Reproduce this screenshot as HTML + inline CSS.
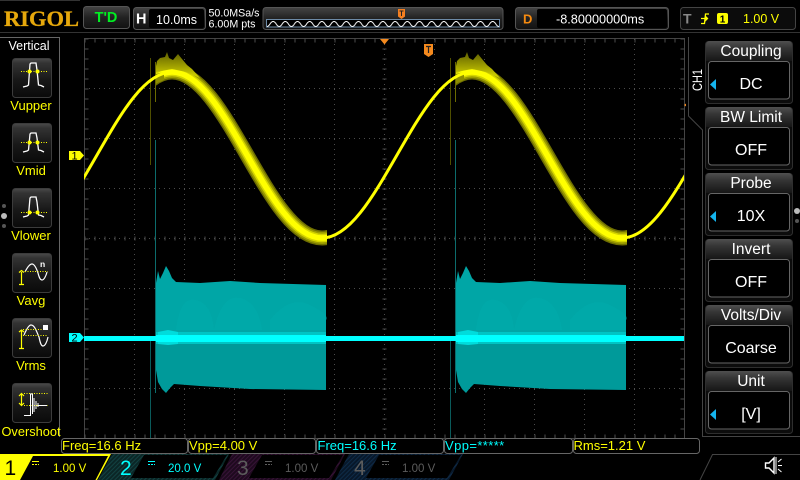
<!DOCTYPE html>
<html>
<head>
<meta charset="utf-8">
<title>RIGOL</title>
<style>
html,body{margin:0;padding:0;background:#000;width:800px;height:480px;overflow:hidden}
svg{display:block}
text{font-family:"Liberation Sans",sans-serif}
</style>
</head>
<body>
<svg width="800" height="480" viewBox="0 0 800 480" xmlns="http://www.w3.org/2000/svg">
<defs>
<linearGradient id="btn" x1="0" y1="0" x2="0" y2="1"><stop offset="0" stop-color="#4a4a4a"/><stop offset=".12" stop-color="#333"/><stop offset=".55" stop-color="#181818"/><stop offset="1" stop-color="#0a0a0a"/></linearGradient>
<linearGradient id="hdr" x1="0" y1="0" x2="0" y2="1"><stop offset="0" stop-color="#505050"/><stop offset=".35" stop-color="#353535"/><stop offset="1" stop-color="#161616"/></linearGradient>
<linearGradient id="bar" x1="0" y1="0" x2="0" y2="1"><stop offset="0" stop-color="#444"/><stop offset=".5" stop-color="#222"/><stop offset="1" stop-color="#111"/></linearGradient>
<linearGradient id="fz" x1="0" y1="0" x2="0" y2="1"><stop offset="0" stop-color="#5e5e00"/><stop offset=".5" stop-color="#9a9a00"/><stop offset="1" stop-color="#d8d800"/></linearGradient>
<pattern id="h2" width="3" height="3" patternUnits="userSpaceOnUse" patternTransform="rotate(45)"><rect width="3" height="3" fill="#0b2626"/><rect width="1" height="3" fill="#124242"/></pattern>
<pattern id="h3" width="3" height="3" patternUnits="userSpaceOnUse" patternTransform="rotate(45)"><rect width="3" height="3" fill="#1e0a1e"/><rect width="1" height="3" fill="#371337"/></pattern>
<pattern id="h4" width="3" height="3" patternUnits="userSpaceOnUse" patternTransform="rotate(45)"><rect width="3" height="3" fill="#08182a"/><rect width="1" height="3" fill="#0e2b48"/></pattern>
<pattern id="mw" width="12.2" height="8" patternUnits="userSpaceOnUse" x="267" y="20"><path d="M0 6.5C3 6.5 3 1.5 6.1 1.5S9.2 6.5 12.2 6.5" fill="none" stroke="#fff" stroke-width="1"/></pattern>
<clipPath id="plot"><rect x="84" y="39" width="600" height="399"/></clipPath>
<clipPath id="bc"><rect x="156" y="39" width="171" height="300"/></clipPath>
<path id="s" fill="none" d="M22 238C49.14 238 72.54 197.52 97 155C121.46 112.48 144.86 72 172 72C199.14 72 222.54 112.48 247 155C271.46 197.52 294.86 238 322 238C349.14 238 372.54 197.52 397 155C421.46 112.48 444.86 72 472 72C499.14 72 522.54 112.48 547 155C571.46 197.52 594.86 238 622 238C649.14 238 672.54 197.52 697 155"/>

<g id="yb">
 <g clip-path="url(#bc)">
  <use href="#s" stroke="#6e6e00" stroke-width="15"/>
  <use href="#s" stroke="#9c9c00" stroke-width="12"/>
  <use href="#s" stroke="#d4d400" stroke-width="8.5"/>
  <use href="#s" stroke="#ffff00" stroke-width="5.5"/>
 </g>
 <path d="M156 66L157 61L160 58L165 57L167 52L169 58L173 60L178 54L182 59L187 65L192 69L200 78L186 72L172 69L156 72Z" fill="url(#fz)"/>
 <path d="M156 74L164 72V80L160 82L156 83Z" fill="#8e8e00"/>
 <rect x="150" y="58" width="1" height="107" fill="#4e4e00"/>
 <rect x="155" y="62" width="1" height="40" fill="#6a6a00"/>
</g>

<g id="cb">
 <path d="M156 283L158 271L160 279L163 273L166 266L169 271L172 278L176 282L200 283L230 281L260 283L326 285V338H156Z" fill="#00a6a6"/>
 <path d="M156 338L156 370L158 382L162 389L166 393L170 388L174 384L200 386L250 389L326 390V338Z" fill="#009a9a"/>
 <path d="M176 330Q180 296 196 300T214 330ZM214 330Q222 294 240 298T262 330ZM270 320Q290 295 310 305T326 320V330H270Z" fill="#00abab" opacity=".7"/>
 <path d="M156 332H326V344H156Z" fill="#00c4c4"/>
 <path d="M158 332L168 330L178 332V344L168 345L158 344Z" fill="#00dcdc"/>
 <rect x="156" y="335" width="170" height="7" fill="#00ffff"/>
 <rect x="150" y="341" width="1" height="97" fill="#0a5a5a"/>
 <rect x="155" y="140" width="1" height="253" fill="#0c6c6c"/>
</g>

<g id="btnbox">
 <rect x="12.5" y=".5" width="39" height="39" rx="3" fill="url(#btn)" stroke="#3c3c3c"/>
</g>

<g id="mb">
 <rect x="705.5" y=".5" width="87" height="62" rx="3" fill="#0c0c0c" stroke="#2e2e2e"/>
 <path d="M706 20V4Q706 0 710 0H788Q792 0 792 4V20Z" fill="url(#hdr)"/>
 <rect x="708.5" y="20.5" width="81" height="37.5" rx="3" fill="#000" stroke="#666"/>
</g>
<path id="arr" d="M716 0V11L710 5.5Z" fill="#14b4ee"/>
</defs>

<rect width="800" height="480" fill="#000"/>

<!-- top -->
<rect x="0" y="0" width="80" height="1" fill="#333"/>
<rect x="0" y="32" width="800" height="1" fill="#333"/>
<text x="4" y="26" font-size="22.5" font-weight="700" fill="#e6a80c" stroke="#e6a80c" stroke-width=".3" style='font-family:"Liberation Serif",serif' textLength="75" lengthAdjust="spacingAndGlyphs">RIGOL</text>

<rect x="83.5" y="6.5" width="46" height="22" rx="3" fill="url(#bar)" stroke="#555"/>
<text x="106" y="22" font-size="14.5" font-weight="700" fill="#00ee22" text-anchor="middle">T'D</text>

<rect x="133.5" y="7.5" width="72" height="22" rx="3" fill="url(#bar)" stroke="#555"/>
<rect x="149" y="9" width="55" height="19" rx="2" fill="#000"/>
<text x="136" y="23.5" font-size="14.5" font-weight="700" fill="#fff">H</text>
<text x="156" y="24" font-size="12.5" fill="#fff">10.0ms</text>
<text x="208.5" y="16.5" font-size="11" fill="#fff" textLength="51" lengthAdjust="spacingAndGlyphs">50.0MSa/s</text>
<text x="208.5" y="27.5" font-size="11" fill="#fff" textLength="47" lengthAdjust="spacingAndGlyphs">6.00M pts</text>

<rect x="263" y="7.5" width="240" height="22" rx="3" fill="url(#bar)" stroke="#555"/>
<rect x="266.5" y="19.5" width="233" height="7.5" fill="#000" stroke="#6d8aa6"/>
<rect x="267" y="20" width="232" height="7" fill="url(#mw)"/>
<path d="M398 9H405V16.5L401.5 19L398 16.5Z" fill="#f57f20"/>
<path d="M399.5 11H403.5M401.5 11V16" stroke="#222" stroke-width="1"/>

<rect x="515.5" y="7.5" width="153" height="22" rx="3" fill="url(#bar)" stroke="#555"/>
<rect x="537" y="9" width="130" height="19" rx="2" fill="#000"/>
<text x="523" y="23.5" font-size="13" font-weight="700" fill="#f58a10">D</text>
<text x="556" y="23.5" font-size="12.7" fill="#fff">-8.80000000ms</text>

<rect x="680.5" y="7.5" width="115" height="22" rx="3" fill="#0c0c0c" stroke="#444"/>
<text x="683" y="23.5" font-size="14" font-weight="700" fill="#888">T</text>
<path d="M701 23.5H704.5L705.5 14H709M701 18.5H708M705 16L707.5 18.5L705 21" fill="none" stroke="#ffff00" stroke-width="1.3"/>
<rect x="717" y="13" width="11" height="11" rx="2" fill="#ffff00"/>
<text x="722.5" y="22.5" font-size="10" font-weight="700" fill="#000" text-anchor="middle">1</text>
<text x="743" y="23" font-size="12.5" fill="#ffff00">1.00 V</text>

<!-- left panel -->
<path d="M0 37.5H59.5V437" fill="none" stroke="#666"/>
<text x="29" y="50" font-size="12.5" fill="#fff" text-anchor="middle">Vertical</text>

<use href="#btnbox" y="58"/>
<use href="#btnbox" y="123"/>
<use href="#btnbox" y="188"/>
<use href="#btnbox" y="253"/>
<use href="#btnbox" y="318"/>
<use href="#btnbox" y="383"/>

<!-- Vupper -->
<path d="M23 87L27 86L28.5 85L30 64L31 63H36L37 70L38.5 85L41 85.5L44 87" fill="none" stroke="#fff" stroke-width="1.3"/>
<path d="M21 71.5H48" stroke="#ffff00" stroke-dasharray="1 1.5"/>
<circle cx="29.5" cy="71.5" r="2" fill="#ffff00"/><circle cx="37.5" cy="71.5" r="2" fill="#ffff00"/>
<!-- Vmid -->
<path d="M23 152L27 151L28.5 150L30 134L31 133H36L37 138L38.5 150L41 150.5L44 152" fill="none" stroke="#fff" stroke-width="1.3"/>
<path d="M21 142.5H48" stroke="#ffff00" stroke-dasharray="1 1.5"/>
<circle cx="29.5" cy="142.5" r="2" fill="#ffff00"/><circle cx="37.5" cy="142.5" r="2" fill="#ffff00"/>
<!-- Vlower -->
<path d="M23 217L27 216L28.5 215L30 198L31 197H36L37 202L38.5 215L41 215.5L44 217" fill="none" stroke="#fff" stroke-width="1.3"/>
<path d="M21 212.5H48" stroke="#ffff00" stroke-dasharray="1 1.5"/>
<circle cx="29.5" cy="212.5" r="2" fill="#ffff00"/><circle cx="37.5" cy="212.5" r="2" fill="#ffff00"/>
<!-- Vavg -->
<path d="M25 272C28 266 30 264 32 264C35 264 37 270 38 273C39 277 40 280 42 280C44 280 46 276 47 272" fill="none" stroke="#fff" stroke-width="1.2"/>
<path d="M25 271.5H48" stroke="#ffff00" stroke-dasharray="1 1.5"/>
<path d="M21.5 272V284M19 284.5H24M19 272.5L21.5 270.5L24 272.5" fill="none" stroke="#ffff00" stroke-width="1.2"/>
<text x="40" y="267" font-size="8.5" font-weight="700" fill="#fff">n</text>
<!-- Vrms -->
<path d="M24 335C27 328 29 325 31 325C35 325 37 333 39 337C40 342 41 346 43 346C45 346 47 342 48 337" fill="none" stroke="#fff" stroke-width="1.2"/>
<path d="M23 329.5H48M23 335.5H48" stroke="#ffff00" stroke-dasharray="1 1.5"/>
<path d="M21.5 331V348M19 348.5H24M19 332L21.5 330L24 332" fill="none" stroke="#ffff00" stroke-width="1.2"/>
<rect x="43" y="325" width="5" height="5" fill="#fff"/>
<!-- Overshoot -->
<path d="M24 393.5H48M24 405.5H48" stroke="#ffff00" stroke-dasharray="1 1.5"/>
<path d="M21.5 394V405M19 396L21.5 393.5L24 396M19 403L21.5 405.5L24 403" fill="none" stroke="#ffff00" stroke-width="1.2"/>
<path d="M24 415.5H30.5V394H32.5V414M34 398V412M36 401V409M38 403V407M38 405.5H47" fill="none" stroke="#fff" stroke-width="1"/>

<g font-size="13" fill="#ffff00" text-anchor="middle">
<text x="31" y="110">Vupper</text>
<text x="31" y="175">Vmid</text>
<text x="31" y="240">Vlower</text>
<text x="31" y="305">Vavg</text>
<text x="31" y="370">Vrms</text>
<text x="31" y="436" font-size="12.8">Overshoot</text>
</g>
<circle cx="4" cy="206" r="2" fill="#555"/><circle cx="4" cy="216" r="3" fill="#bbb"/><circle cx="4" cy="226" r="2" fill="#555"/>
<circle cx="797" cy="211" r="3" fill="#bbb"/><circle cx="797" cy="221" r="2" fill="#555"/>

<!-- grid -->
<g stroke="#4c4c4c" fill="none">
 <path stroke-dasharray="1 4" d="M134.5 39V438M184.5 39V438M234.5 39V438M284.5 39V438M334.5 39V438M384.5 39V438M434.5 39V438M484.5 39V438M534.5 39V438M584.5 39V438M634.5 39V438M84 88.5H684M84 138.5H684M84 188.5H684M84 238.5H684M84 288.5H684M84 338.5H684M84 388.5H684"/>
 <path d="M84.5 38.5H684.5V438.5H84.5Z" stroke="#444"/>
 <path stroke-dasharray="1 9" stroke-width="4" d="M84.5 40.5H684.5M84.5 436.5H684.5"/>
 <path stroke-dasharray="1 9" stroke-width="4" d="M86.5 38.5V438.5M682.5 38.5V438.5"/>
 <path stroke-dasharray="1 9" stroke-width="4" d="M84.5 238.5H684.5M384.5 38.5V438.5"/>
</g>

<!-- waves -->
<g clip-path="url(#plot)">
 <use href="#cb"/>
 <use href="#cb" x="300"/>
 <rect x="84" y="336" width="600" height="5" fill="#00ffff"/>
 <use href="#yb"/>
 <use href="#yb" x="300"/>
 <use href="#s" stroke="#ffff00" stroke-width="3"/>
</g>

<!-- markers -->
<path d="M69 151H80L84 155.5L80 160H69Z" fill="#ffff00"/>
<text x="74.5" y="159.5" font-size="11" fill="#000" text-anchor="middle">1</text>
<path d="M69 333H80L84 337.5L80 342H69Z" fill="#00ffff"/>
<text x="74.5" y="341.5" font-size="11" fill="#000" text-anchor="middle">2</text>
<path d="M380 39H389L384.5 44.5Z" fill="#f58a1e"/>
<path d="M424 44H433V54L428.5 57L424 54Z" fill="#f58a1e"/>
<path d="M426 46.5H431M428.5 46.5V53" stroke="#222" stroke-width="1.2"/>
<path d="M686 103.5V106.5L684 105Z" fill="#f58a1e"/>

<!-- right panel -->
<path d="M688.5 37V116L702.5 130V436.5H800" fill="none" stroke="#444"/>
<text transform="translate(702,91) rotate(-90)" font-size="14" fill="#fff" textLength="22" lengthAdjust="spacingAndGlyphs">CH1</text>
<use href="#mb" y="41"/>
<use href="#mb" y="107"/>
<use href="#mb" y="173"/>
<use href="#mb" y="239"/>
<use href="#mb" y="305"/>
<use href="#mb" y="371"/>
<g fill="#fff" text-anchor="middle" font-size="15.5">
<text x="751" y="56">Coupling</text>
<text x="751" y="122">BW Limit</text>
<text x="751" y="188">Probe</text>
<text x="751" y="254">Invert</text>
<text x="751" y="320">Volts/Div</text>
<text x="751" y="386">Unit</text>
<g font-size="16">
<text x="751" y="89">DC</text>
<text x="751" y="155">OFF</text>
<text x="751" y="221">10X</text>
<text x="751" y="287">OFF</text>
<text x="751" y="353">Coarse</text>
<text x="751" y="419">[V]</text>
</g>
</g>
<use href="#arr" y="79"/>
<use href="#arr" y="211"/>
<use href="#arr" y="409"/>

<!-- measure bar -->
<g fill="#000" stroke="#666">
<rect x="61.5" y="438.5" width="126" height="15" rx="3"/>
<rect x="188.5" y="438.5" width="127" height="15" rx="3"/>
<rect x="316.5" y="438.5" width="127" height="15" rx="3"/>
<rect x="444.5" y="438.5" width="128" height="15" rx="3"/>
<rect x="573.5" y="438.5" width="126" height="15" rx="3"/>
</g>
<g font-size="13">
<text x="62" y="450" fill="#ffff00">Freq=16.6 Hz</text>
<text x="189" y="450" fill="#ffff00">Vpp=4.00 V</text>
<text x="317.5" y="450" fill="#00ffff">Freq=16.6 Hz</text>
<text x="445" y="450" fill="#00ffff" letter-spacing=".4">Vpp=*****</text>
<text x="573.5" y="450" fill="#ffff00">Rms=1.21 V</text>
</g>

<!-- channels -->
<path d="M0 454H111L97 480H0Z" fill="#ffff00"/>
<path d="M33 456H108L95.5 480H20Z" fill="#000"/>
<text x="4.5" y="475" font-size="21" fill="#000">1</text>
<path d="M32 461.5H39M32 464.5H34M35 464.5H37M38 464.5H39" stroke="#ffff00"/>
<text x="53" y="472" font-size="11.5" fill="#ffff00">1.00 V</text>

<path d="M112 454H229L215 480H98Z" fill="url(#h2)"/>
<path d="M144 455H227L213 478H131Z" fill="#000"/>
<text x="120" y="475" font-size="21" fill="#00ffff">2</text>
<path d="M148 461.5H155M148 464.5H150M151 464.5H153M154 464.5H155" stroke="#00ffff"/>
<text x="168" y="472" font-size="11.5" fill="#00ffff">20.0 V</text>

<path d="M232 454H345L331 480H219Z" fill="url(#h3)"/>
<path d="M262 455H343L329 478H249Z" fill="#000"/>
<text x="237" y="475" font-size="21" fill="#5c5c5c">3</text>
<path d="M265 461.5H272M265 464.5H267M268 464.5H270M271 464.5H272" stroke="#5c5c5c"/>
<text x="285" y="472" font-size="11.5" fill="#5c5c5c">1.00 V</text>

<path d="M349 454H463L449 480H335Z" fill="url(#h4)"/>
<path d="M379 455H461L447 478H366Z" fill="#000"/>
<text x="354" y="475" font-size="21" fill="#5c5c5c">4</text>
<path d="M382 461.5H389M382 464.5H384M385 464.5H387M388 464.5H389" stroke="#5c5c5c"/>
<text x="402" y="472" font-size="11.5" fill="#5c5c5c">1.00 V</text>

<path d="M700 480L712.5 454.5H800" fill="none" stroke="#444"/>
<path d="M765.5 463V468H769L774 473V458L769 463Z" fill="none" stroke="#fff" stroke-width="1.4"/>
<path d="M776 457V474" stroke="#fff" stroke-width="1"/>
<path d="M778 462L781.5 459M778 465.5H782M778 469L781.5 472" stroke="#fff" stroke-width="1"/>
</svg>
</body>
</html>
